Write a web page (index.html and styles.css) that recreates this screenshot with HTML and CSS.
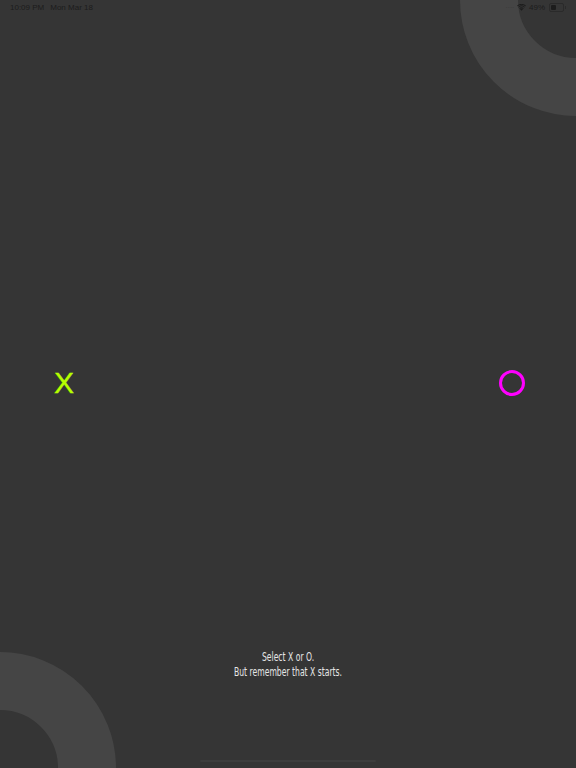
FILE: index.html
```html
<!DOCTYPE html>
<html lang="en">
<head>
<meta charset="utf-8">
<title>Tic Tac Toe</title>
<link rel="stylesheet" href="styles.css">
</head>
<body>
<div class="screen">
  <div class="ring ring-top"></div>
  <div class="ring ring-bottom"></div>

  <div class="status">
    <div class="status-left">
      <span class="time">10:09 PM</span>
      <span class="date">Mon Mar 18</span>
    </div>
    <div class="status-right">
      <span class="dots">····</span>
      <svg class="wifi" width="9" height="7" viewBox="0 0 18 14">
        <path d="M9 13.5 L6.3 10.4 A4 4 0 0 1 11.7 10.4 Z" fill="#1c1c1c"/>
        <path d="M4.6 8.5 A6.5 6.5 0 0 1 13.4 8.5 L12.2 9.8 A4.8 4.8 0 0 0 5.8 9.8 Z" fill="#1c1c1c"/>
        <path d="M2.2 5.9 A10 10 0 0 1 15.8 5.9 L14.6 7.2 A8.2 8.2 0 0 0 3.4 7.2 Z" fill="#1c1c1c"/>
        <path d="M0 3.4 A13.2 13.2 0 0 1 18 3.4 L16.8 4.7 A11.4 11.4 0 0 0 1.2 4.7 Z" fill="#1c1c1c"/>
      </svg>
      <span class="battery-text">49%</span>
      <span class="battery"><span class="battery-level"></span></span>
      <span class="battery-cap"></span>
    </div>
  </div>

  <div class="choices">
    <div class="choice choice-x">X</div>
    <div class="choice choice-o"></div>
  </div>

  <div class="message">
    <p>Select X or O.</p>
    <p>But remember that X starts.</p>
  </div>

  <div class="home-indicator"></div>
</div>
</body>
</html>
```
FILE: styles.css
```css
html, body {
  margin: 0;
  padding: 0;
  background: #353535;
}

.screen {
  position: relative;
  width: 576px;
  height: 768px;
  overflow: hidden;
  display: flex;
  flex-direction: column;
  background: #353535;
  font-family: "Liberation Sans", Arial, sans-serif;
}

.ring {
  position: absolute;
  width: 232px;
  height: 232px;
  box-sizing: border-box;
  border: 58px solid #454545;
  border-radius: 50%;
}

.ring-top {
  left: 460px;
  top: -116px;
}

.ring-bottom {
  left: -116px;
  top: 652px;
}

.status {
  position: relative;
  height: 14px;
  display: flex;
  justify-content: space-between;
  align-items: center;
  padding: 0 10px 0 10px;
  font-size: 8px;
  color: #1c1c1c;
}

.status-left {
  display: flex;
  gap: 6px;
}

.status-right {
  display: flex;
  align-items: center;
  gap: 3px;
}

.dots {
  color: #3a3a3a;
  letter-spacing: -0.5px;
}

.battery {
  display: inline-block;
  width: 11px;
  height: 5px;
  border: 1px solid #2a2a2a;
  border-radius: 2px;
  padding: 1px;
  box-sizing: content-box;
  margin-left: 1px;
}

.battery-level {
  display: block;
  width: 5px;
  height: 5px;
  background: #1c1c1c;
  border-radius: 1px;
}

.battery-cap {
  display: inline-block;
  width: 1px;
  height: 3px;
  background: #2a2a2a;
  margin-left: -2px;
}

.choices {
  position: relative;
  height: 30px;
  margin-top: 354px;
  display: flex;
  justify-content: space-between;
  align-items: center;
  padding: 0 51px 0 54px;
}

.choice-x {
  color: #b6ff00;
  font-size: 30px;
  line-height: 30px;
  -webkit-text-stroke: 0.4px #b6ff00;
}

.choice-o {
  width: 26px;
  height: 26px;
  box-sizing: border-box;
  border: 3px solid #ff00ff;
  border-radius: 50%;
}

.message {
  position: relative;
  margin-top: auto;
  margin-bottom: 80px;
  text-align: center;
  color: #e6e6e6;
  font-family: "DejaVu Sans Condensed", "DejaVu Sans", sans-serif;
  font-size: 12px;
  line-height: 15px;
  transform: scaleX(0.71);
}

.message p {
  margin: 0;
}

.home-indicator {
  position: relative;
  width: 176px;
  height: 2px;
  margin: 0 auto 6px;
  background: #3d3d3d;
  border-radius: 1px;
}
```
